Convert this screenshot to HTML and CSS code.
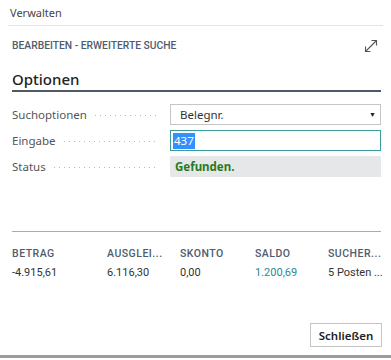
FILE: index.html
```html
<!DOCTYPE html>
<html lang="de">
<head>
  <meta charset="UTF-8" />
  <title>Erweiterte Suche</title>
  <link rel="stylesheet" href="styles.css">
</head>
<body>
  <div class="nav">Verwalten</div>

  <div class="dialog-head">
    <span class="caption">BEARBEITEN - ERWEITERTE SUCHE</span>
    <svg class="expand" width="16" height="16" viewBox="0 0 16 16">
      <path d="M2.5 13.5 L13.5 2.5 M8.5 2.5 H13.5 V7.5 M2.5 8.5 V13.5 H7.5" fill="none" stroke="#555" stroke-width="1.1" />
    </svg>
  </div>

  <div class="section">
    <h2>Optionen</h2>

    <div class="fields">
      <label class="label"><span>Suchoptionen</span><span class="leader"></span></label>
      <div class="box select">Belegnr.<span class="caret">&#9660;</span></div>

      <label class="label"><span>Eingabe</span><span class="leader"></span></label>
      <div class="box input"><span class="sel">437</span></div>

      <label class="label"><span>Status</span><span class="leader"></span></label>
      <div class="box status">Gefunden.</div>
    </div>

    <div class="totals">
      <div class="col"><div class="th">BETRAG</div><div class="td">-4.915,61</div></div>
      <div class="col"><div class="th">AUSGLEI...</div><div class="td">6.116,30</div></div>
      <div class="col"><div class="th">SKONTO</div><div class="td">0,00</div></div>
      <div class="col"><div class="th">SALDO</div><div class="td link">1.200,69</div></div>
      <div class="col"><div class="th">SUCHER...</div><div class="td">5 Posten ...</div></div>
    </div>
  </div>

  <div class="actions">
    <button>Schließen</button>
  </div>

  <div class="below"></div>
</body>
</html>
```

FILE: styles.css
```css
body {
  margin: 0;
  width: 391px;
  height: 360px;
  overflow: hidden;
  background: #fff;
  color: #333;
  font-family: "Noto Sans", "Open Sans", sans-serif;
}
.nav {
  margin: 0 8px;
  height: 26px;
  box-sizing: border-box;
  padding: 5px 0 0 2px;
  font-size: 11px;
  line-height: 16px;
  color: #444;
  border-bottom: 1px solid #e4e4e4;
}
.dialog-head {
  display: flex;
  align-items: center;
  justify-content: space-between;
  height: 38px;
  padding: 0 12px;
}
.caption {
  font-family: Roboto, "Liberation Sans", sans-serif;
  font-size: 10.3px;
  font-weight: 500;
  letter-spacing: 0;
  color: #505c6d;
}
.expand {
  margin-top: 2px;
  margin-right: 0;
}
.section {
  padding: 0 10px 0 12px;
}
h2 {
  margin: 5px 0 0;
  padding-bottom: 1px;
  font-size: 15px;
  line-height: 20px;
  font-weight: 500;
  color: #222;
  border-bottom: 2px solid #4d5868;
}
.fields {
  display: grid;
  grid-template-columns: 158px 211px;
  row-gap: 5px;
  margin-top: 12px;
}
.label {
  display: flex;
  align-items: center;
  font-size: 11.5px;
  color: #555;
  padding-right: 12px;
}
.leader {
  flex: 1;
  height: 1px;
  margin: 2px 0 0 8px;
  background: linear-gradient(to right, #b8b8b8 1px, transparent 1px) 0 0 / 5px 1px repeat-x;
}
.box {
  height: 21px;
  box-sizing: border-box;
  display: flex;
  align-items: center;
  font-size: 11.5px;
}
.select {
  border: 1px solid #c6c6c6;
  padding: 0 4px 0 9px;
  justify-content: space-between;
  color: #333;
}
.caret {
  font-size: 7px;
  color: #222;
}
.input {
  border: 1px solid #3a9c9e;
  padding-left: 2px;
}
.sel {
  background: #3390ff;
  color: #fff;
  padding: 0 1px;
  line-height: 16px;
}
.status {
  background: #e6e7e9;
  padding-left: 5px;
  font-weight: 700;
  color: #2a7a1d;
}
.totals {
  display: grid;
  grid-template-columns: 95px 73px 75px 73px 53px;
  margin-top: 54px;
  padding-top: 14px;
  border-top: 1px solid #a4acb6;
}
.th {
  font-family: Roboto, "Liberation Sans", sans-serif;
  font-size: 10.5px;
  font-weight: 500;
  letter-spacing: 0.5px;
  color: #505c6d;
  line-height: 16px;
  white-space: nowrap;
}
.td {
  margin-top: 3px;
  font-family: Roboto, "Liberation Sans", sans-serif;
  font-size: 11px;
  line-height: 16px;
  color: #333;
  white-space: nowrap;
}
.link {
  color: #1f8a94;
}
.actions {
  display: flex;
  justify-content: flex-end;
  padding: 0 9px;
  margin-top: 42px;
}
button {
  width: 72px;
  height: 24px;
  border: 1px solid #c4c4c4;
  background: #fff;
  font-family: "Noto Sans", "Open Sans", sans-serif;
  font-size: 11.5px;
  font-weight: 600;
  color: #222;
  padding: 0;
}
.below {
  margin-top: 8px;
  height: 3px;
  background: #9c9c9c;
}
```
